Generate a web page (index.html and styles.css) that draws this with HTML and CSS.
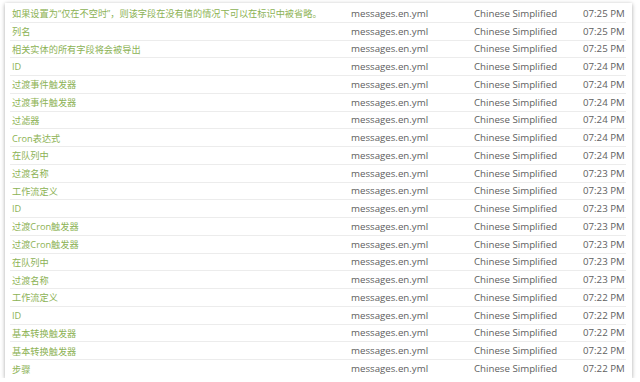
FILE: index.html
```html
<!DOCTYPE html>
<html lang="zh">
<head>
<meta charset="utf-8">
<title>Translations</title>
<link rel="stylesheet" href="styles.css">
</head>
<body>
<div class="card">
  <div class="row"><span class="key">如果设置为“仅在不空时”，则该字段在没有值的情况下可以在标识中被省略。</span><span class="file">messages.en.yml</span><span class="lang">Chinese Simplified</span><span class="time">07:25 PM</span></div>
  <div class="row"><span class="key">列名</span><span class="file">messages.en.yml</span><span class="lang">Chinese Simplified</span><span class="time">07:25 PM</span></div>
  <div class="row"><span class="key">相关实体的所有字段将会被导出</span><span class="file">messages.en.yml</span><span class="lang">Chinese Simplified</span><span class="time">07:25 PM</span></div>
  <div class="row"><span class="key">ID</span><span class="file">messages.en.yml</span><span class="lang">Chinese Simplified</span><span class="time">07:24 PM</span></div>
  <div class="row"><span class="key">过渡事件触发器</span><span class="file">messages.en.yml</span><span class="lang">Chinese Simplified</span><span class="time">07:24 PM</span></div>
  <div class="row"><span class="key">过渡事件触发器</span><span class="file">messages.en.yml</span><span class="lang">Chinese Simplified</span><span class="time">07:24 PM</span></div>
  <div class="row"><span class="key">过滤器</span><span class="file">messages.en.yml</span><span class="lang">Chinese Simplified</span><span class="time">07:24 PM</span></div>
  <div class="row"><span class="key">Cron表达式</span><span class="file">messages.en.yml</span><span class="lang">Chinese Simplified</span><span class="time">07:24 PM</span></div>
  <div class="row"><span class="key">在队列中</span><span class="file">messages.en.yml</span><span class="lang">Chinese Simplified</span><span class="time">07:24 PM</span></div>
  <div class="row"><span class="key">过渡名称</span><span class="file">messages.en.yml</span><span class="lang">Chinese Simplified</span><span class="time">07:23 PM</span></div>
  <div class="row"><span class="key">工作流定义</span><span class="file">messages.en.yml</span><span class="lang">Chinese Simplified</span><span class="time">07:23 PM</span></div>
  <div class="row"><span class="key">ID</span><span class="file">messages.en.yml</span><span class="lang">Chinese Simplified</span><span class="time">07:23 PM</span></div>
  <div class="row"><span class="key">过渡Cron触发器</span><span class="file">messages.en.yml</span><span class="lang">Chinese Simplified</span><span class="time">07:23 PM</span></div>
  <div class="row"><span class="key">过渡Cron触发器</span><span class="file">messages.en.yml</span><span class="lang">Chinese Simplified</span><span class="time">07:23 PM</span></div>
  <div class="row"><span class="key">在队列中</span><span class="file">messages.en.yml</span><span class="lang">Chinese Simplified</span><span class="time">07:23 PM</span></div>
  <div class="row"><span class="key">过渡名称</span><span class="file">messages.en.yml</span><span class="lang">Chinese Simplified</span><span class="time">07:23 PM</span></div>
  <div class="row"><span class="key">工作流定义</span><span class="file">messages.en.yml</span><span class="lang">Chinese Simplified</span><span class="time">07:22 PM</span></div>
  <div class="row"><span class="key">ID</span><span class="file">messages.en.yml</span><span class="lang">Chinese Simplified</span><span class="time">07:22 PM</span></div>
  <div class="row"><span class="key">基本转换触发器</span><span class="file">messages.en.yml</span><span class="lang">Chinese Simplified</span><span class="time">07:22 PM</span></div>
  <div class="row"><span class="key">基本转换触发器</span><span class="file">messages.en.yml</span><span class="lang">Chinese Simplified</span><span class="time">07:22 PM</span></div>
  <div class="row last"><span class="key">步骤</span><span class="file">messages.en.yml</span><span class="lang">Chinese Simplified</span><span class="time">07:22 PM</span></div>
</div>
</body>
</html>
```

FILE: styles.css
```css
html, body {
  margin: 0;
  padding: 0;
  background: #ffffff;
}

body {
  font-family: "Open Sans", "Noto Sans CJK SC", sans-serif;
  color: #5a5a5a;
}

.card {
  margin: 3px 8px 0 5px;
  width: 627px;
  height: 375px;
  box-sizing: border-box;
  padding-top: 2px;
  background: #ffffff;
  box-shadow: 0 1px 4px rgba(0, 0, 0, 0.35);
  overflow: hidden;
}

.row {
  display: grid;
  grid-template-columns: 339px 123px 109px 1fr;
  align-items: center;
  height: 17.75px;
  box-sizing: border-box;
  margin: 0 6px 0 5px;
  padding-left: 2px;
  border-bottom: 1px solid #ececec;
  white-space: nowrap;
}

.row.last {
  border-bottom: none;
}

.key {
  color: #8cb254;
  font-size: 9.2px;
}

.file,
.lang,
.time {
  font-size: 9.7px;
  color: #5e5e5e;
}
```
